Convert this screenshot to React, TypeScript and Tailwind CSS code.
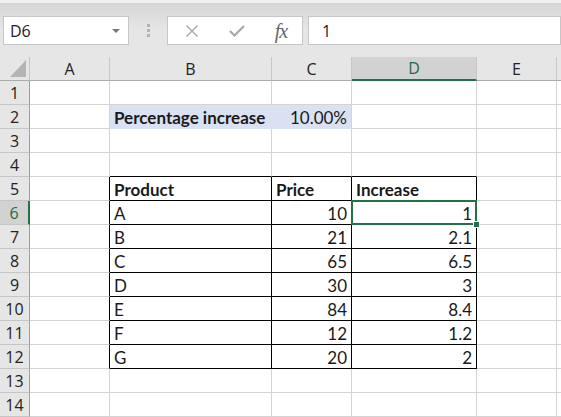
import React from 'react';

type Cell = { text?: string; bold?: boolean; right?: boolean; fill?: boolean };

const COLS = ['A', 'B', 'C', 'D', 'E', 'F'];
const COL_W: Record<string, string> = {
  A: 'w-[80px]',
  B: 'w-[162px]',
  C: 'w-[80px]',
  D: 'w-[125px]',
  E: 'w-[80px]',
  F: 'w-[80px]',
};

const products: [string, string, string][] = [
  ['A', '10', '1'],
  ['B', '21', '2.1'],
  ['C', '65', '6.5'],
  ['D', '30', '3'],
  ['E', '84', '8.4'],
  ['F', '12', '1.2'],
  ['G', '20', '2'],
];

function cellAt(r: number, c: string): Cell {
  if (r === 2 && c === 'B') return { text: 'Percentage increase', bold: true, fill: true };
  if (r === 2 && c === 'C') return { text: '10.00%', right: true, fill: true };
  if (r === 5 && c === 'B') return { text: 'Product', bold: true };
  if (r === 5 && c === 'C') return { text: 'Price', bold: true };
  if (r === 5 && c === 'D') return { text: 'Increase', bold: true };
  if (r >= 6 && r <= 12) {
    const p = products[r - 6];
    if (c === 'B') return { text: p[0] };
    if (c === 'C') return { text: p[1], right: true };
    if (c === 'D') return { text: p[2], right: true };
  }
  return {};
}

const inTable = (r: number, c: string) => r >= 5 && r <= 12 && (c === 'B' || c === 'C' || c === 'D');

function borderClass(r: number, c: string, cell: Cell) {
  const right =
    inTable(r, c) || (c === 'A' && r >= 5 && r <= 12)
      ? 'border-r-black'
      : cell.fill && c === 'B'
        ? 'border-r-[#d9e1f2]'
        : 'border-r-[#d4d4d4]';
  const bottom =
    inTable(r, c) || (r === 4 && (c === 'B' || c === 'C' || c === 'D'))
      ? 'border-b-black'
      : cell.fill
        ? 'border-b-[#d9e1f2]'
        : 'border-b-[#d4d4d4]';
  return `${right} ${bottom}`;
}

function XIcon() {
  return (
    <svg width="14" height="14" viewBox="0 0 14 14" fill="none" stroke="#a8a8a8" strokeWidth="1.4">
      <path d="M1.5 1.5 L12.5 12.5 M12.5 1.5 L1.5 12.5" />
    </svg>
  );
}

function CheckIcon() {
  return (
    <svg width="16" height="12" viewBox="0 0 16 12" fill="none" stroke="#a8a8a8" strokeWidth="2.2">
      <path d="M1 6 L5.5 10.5 L15 1" />
    </svg>
  );
}

export default function App() {
  const rows = Array.from({ length: 14 }, (_, i) => i + 1);

  return (
    <div className="w-[561px] h-[417px] overflow-hidden bg-white font-['Lato',sans-serif] text-[#1a1a1a]">
      {/* Ribbon edge */}
      <div className="h-[3px] bg-[#f1f0ef]" />
      <div className="bg-gradient-to-b from-[#d6d6d6] via-[#e6e6e6] to-[#e6e6e6] pt-[13px] pb-[12px] flex items-center font-['Open_Sans',sans-serif]">
        {/* Name box */}
        <div className="ml-[3px] w-[126px] h-[29px] bg-white border border-[#c6c6c6] flex items-center justify-between pl-[6px] pr-[8px]">
          <span className="text-[16px] text-[#222]">D6</span>
          <div className="w-0 h-0 border-l-[4px] border-r-[4px] border-t-[4px] border-l-transparent border-r-transparent border-t-[#777]" />
        </div>
        {/* Grip */}
        <div className="w-[38px] flex flex-col items-center gap-[2px]">
          <div className="w-[3px] h-[3px] bg-[#b3b3b3]" />
          <div className="w-[3px] h-[3px] bg-[#b3b3b3]" />
          <div className="w-[3px] h-[3px] bg-[#b3b3b3]" />
        </div>
        {/* Fx box */}
        <div className="w-[136px] h-[29px] bg-white border border-[#c6c6c6] flex items-center">
          <div className="w-[46px] flex justify-center pl-[2px]">
            <XIcon />
          </div>
          <div className="w-[46px] flex justify-center">
            <CheckIcon />
          </div>
          <div className="w-[42px] flex justify-center">
            <span className="font-['Liberation_Serif',serif] italic text-[20px] leading-none text-[#666] tracking-[-1px]">fx</span>
          </div>
        </div>
        {/* Formula bar */}
        <div className="ml-[5px] flex-1 h-[29px] bg-white border border-[#c6c6c6] flex items-center pl-[13px]">
          <span className="text-[16px] text-[#222]">1</span>
        </div>
      </div>

      {/* Column headers */}
      <div className="flex h-[24px] bg-[#e6e6e6] font-['Open_Sans',sans-serif] text-[16px] text-[#222]">
        <div className="relative w-[30px] shrink-0 border-r border-r-[#c6c6c6] border-b border-b-[#ababab]">
          <svg className="absolute right-[3px] bottom-[3px]" width="16" height="17" viewBox="0 0 16 17">
            <path d="M16 0 L16 17 L0 17 Z" fill="#b4b4b4" />
          </svg>
        </div>
        {COLS.map(c =>
          c === 'D' ? (
            <div key={c} className={`${COL_W[c]} shrink-0 flex items-center justify-center bg-[#d2d2d2] border-r border-r-[#c6c6c6] border-b-2 border-b-[#217346] text-[#1e6b45]`}>
              {c}
            </div>
          ) : (
            <div key={c} className={`${COL_W[c]} shrink-0 flex items-center justify-center border-r border-r-[#c6c6c6] border-b border-b-[#ababab]`}>
              {c === 'F' ? '' : c}
            </div>
          ),
        )}
      </div>

      {/* Grid */}
      {rows.map(r => (
        <div key={r} className="flex h-[24px]">
          {r === 6 ? (
            <div className="w-[30px] shrink-0 flex items-center justify-center bg-[#d2d2d2] border-r-2 border-r-[#217346] border-b border-b-[#c6c6c6] font-['Open_Sans',sans-serif] text-[16px] text-[#1e6b45]">
              {r}
            </div>
          ) : (
            <div className="w-[30px] shrink-0 flex items-center justify-center bg-[#e6e6e6] border-r border-r-[#9e9e9e] border-b border-b-[#c6c6c6] font-['Open_Sans',sans-serif] text-[16px] text-[#222]">
              {r}
            </div>
          )}
          {COLS.map(c => {
            const cell = cellAt(r, c);
            const selected = r === 6 && c === 'D';
            return (
              <div
                key={c}
                className={`${COL_W[c]} shrink-0 relative flex items-center border-r border-b px-[4px] text-[17px] leading-none ${borderClass(r, c, cell)} ${cell.fill ? 'bg-[#d9e1f2]' : ''} ${cell.right ? 'justify-end' : 'justify-start'} ${cell.bold ? 'font-bold' : ''} ${selected ? 'z-10' : ''}`}
              >
                <span className="whitespace-nowrap pt-[2px]">{cell.text}</span>
                {selected && (
                  <>
                    <div className="absolute -left-[1px] -top-[1px] -right-[1px] -bottom-[1px] border-2 border-[#217346]" />
                    <div className="absolute -right-[4px] -bottom-[4px] w-[7px] h-[7px] bg-[#217346] border border-white" />
                  </>
                )}
              </div>
            );
          })}
        </div>
      ))}
    </div>
  );
}
